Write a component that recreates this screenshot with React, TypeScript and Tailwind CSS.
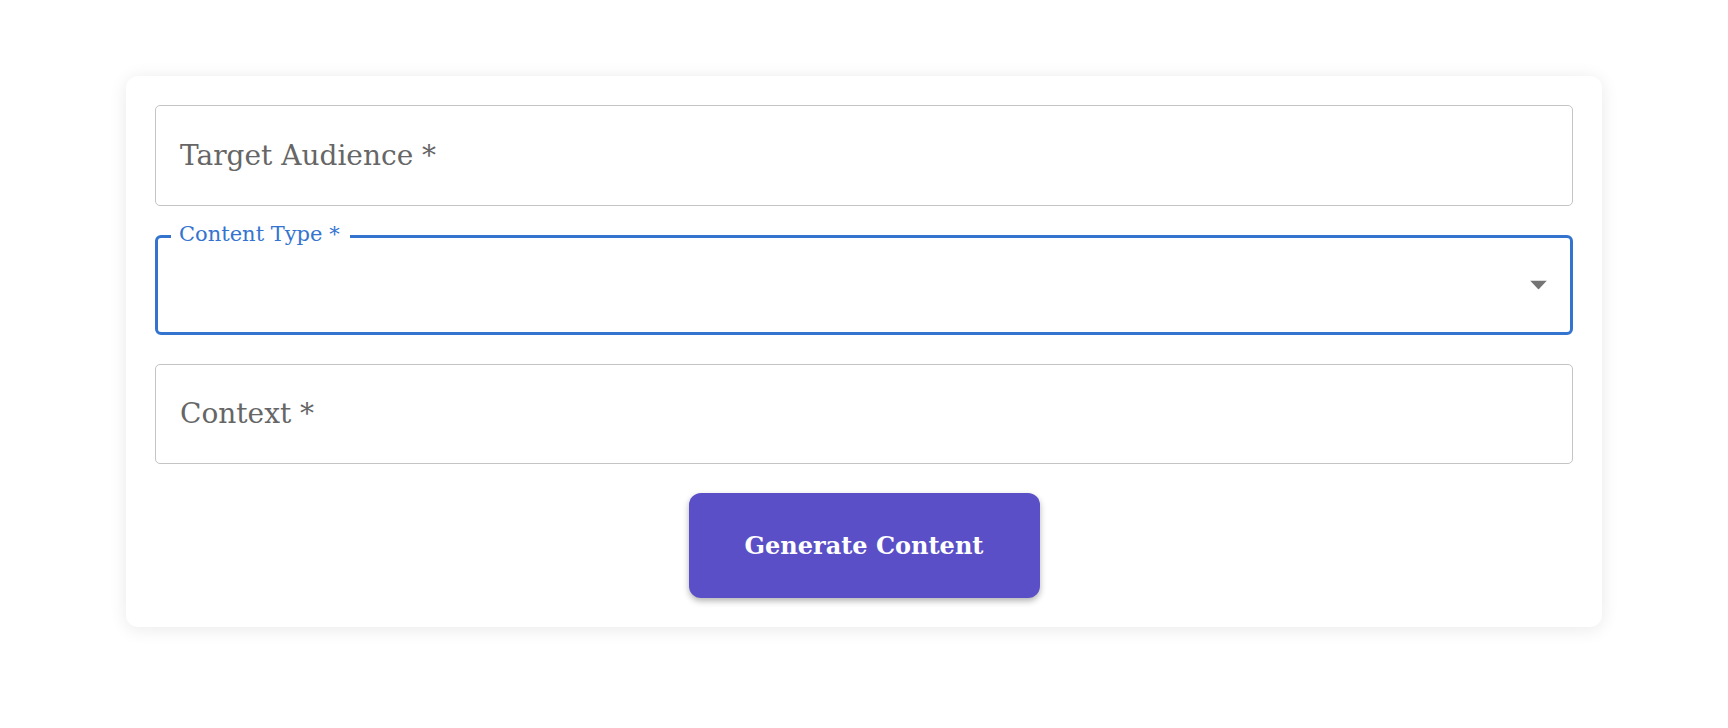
import { useState } from "react";

const serif = "font-['DejaVu_Serif','Liberation_Serif',serif]";

function OutlinedInput({ label, tall }: { label: string; tall?: boolean }) {
  return (
    <div
      className={`flex items-center rounded-[5px] border border-[#c4c4c4] bg-white pl-[24px] ${
        tall ? "h-[101px]" : "h-[100px]"
      }`}
    >
      <span className="text-[28px] leading-none text-[#666666]">
        {label} *
      </span>
    </div>
  );
}

export default function App() {
  const [type] = useState("");

  return (
    <div className={`min-h-screen bg-white px-[126px] pt-[76px] ${serif}`}>
      <div className="flex flex-col gap-[29px] rounded-[12px] bg-white p-[29px] shadow-[0_2px_18px_rgba(0,0,0,0.09)]">
        <OutlinedInput label="Target Audience" tall />

        {/* select, focused */}
        <div className="relative flex h-[100px] items-center rounded-[6px] border-[3px] border-[#3474cf] bg-white pl-[21px]">
          <span className="absolute -top-[17px] left-[13px] bg-white pl-[8px] pr-[10px] text-[21px] leading-[26px] text-[#3474cf]">
            Content Type *
          </span>
          <span className="text-[28px] text-[#222]">{type}</span>
          <svg
            className="absolute right-[23px] top-1/2 -translate-y-1/2"
            width="17"
            height="9"
            viewBox="0 0 17 9"
          >
            <path d="M0 0h17L8.5 9z" fill="#757575" />
          </svg>
        </div>

        <OutlinedInput label="Context" />

        <div className="flex justify-center">
          <button className="h-[105px] w-[351px] rounded-[12px] bg-[#5b4fc7] text-[24px] font-bold text-white shadow-[0_3px_6px_rgba(0,0,0,0.3)]">
            Generate Content
          </button>
        </div>
      </div>
    </div>
  );
}
